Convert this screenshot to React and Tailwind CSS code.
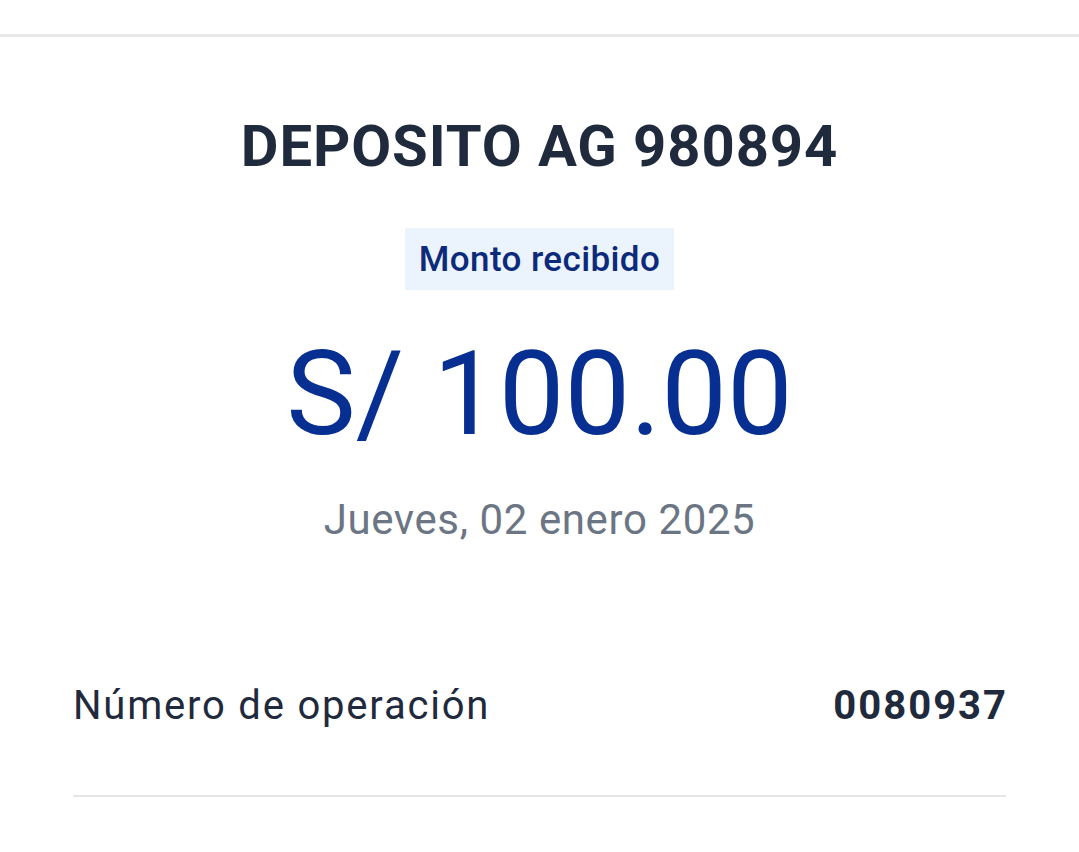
import React from 'react';

const font = { fontFamily: 'Roboto, "Noto Sans", sans-serif' };

const App = () => {
  return (
    <div className="w-[1079px] h-[852px] bg-white overflow-hidden" style={font}>
      {/* Top divider */}
      <div className="h-[34px]" />
      <div className="h-[3px] bg-[#e8e8ea]" />

      {/* Header block */}
      <div className="flex flex-col items-center">
        <h1 className="mt-[80px] text-[58px] leading-none font-bold tracking-[0.9px] text-[#1f2a3c]">
          DEPOSITO AG 980894
        </h1>

        <div className="mt-[53px] h-[62px] px-[14px] flex items-center bg-[#ebf3fd]">
          <span className="text-[35px] leading-none font-medium tracking-[0.4px] text-[#0c2a7a]">Monto recibido</span>
        </div>

        <div className="mt-[46px] text-[117px] leading-none font-normal text-[#072f91]">
          S/ 100.00
        </div>

        <div className="mt-[46px] text-[42px] leading-none tracking-[0.6px] text-[#6c7584]">
          Jueves, 02 enero 2025
        </div>
      </div>

      {/* Detail row */}
      <div className="mx-[73px] mt-[145px]">
        <div className="flex items-center justify-between pb-[69px] border-b-2 border-[#e6e6e8]">
          <span className="text-[40px] leading-none tracking-[1.8px] text-[#1f2a3c]">Número de operación</span>
          <span className="-mr-[2px] text-[40px] leading-none font-bold tracking-[2px] text-[#1f2a3c]">0080937</span>
        </div>
      </div>
    </div>
  );
};

export default App;
